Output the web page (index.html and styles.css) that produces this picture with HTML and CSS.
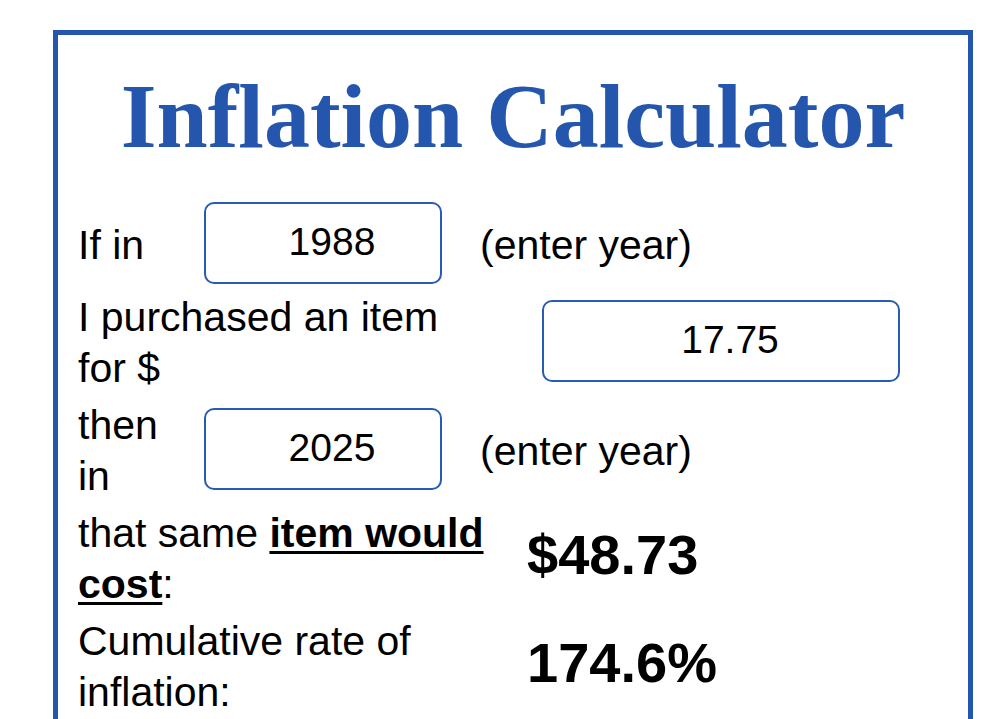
FILE: index.html
```html
<!DOCTYPE html>
<html lang="en">
<head>
  <meta charset="UTF-8">
  <meta name="viewport" content="width=device-width, initial-scale=1.0">
  <title>Inflation Calculator</title>
  <link rel="stylesheet" href="styles.css">
</head>
<body>
  <div class="calculator">
    <h1 class="calc-title">Inflation Calculator</h1>

    <div class="calc-row">
      <span class="calc-label">If in</span>
      <input class="calc-input" type="text" id="startYear" value="1988">
      <span class="calc-hint">(enter year)</span>
    </div>

    <div class="calc-row">
      <span class="calc-label calc-label-wide">I purchased an item for $</span>
      <input class="calc-input calc-input-wide" type="text" id="amount" value="17.75">
    </div>

    <div class="calc-row">
      <span class="calc-label">then in</span>
      <input class="calc-input" type="text" id="endYear" value="2025">
      <span class="calc-hint">(enter year)</span>
    </div>

    <div class="calc-row">
      <span class="calc-label calc-label-result">that same <u class="strong">item would cost</u>:</span>
      <span class="calc-result">$48.73</span>
    </div>

    <div class="calc-row">
      <span class="calc-label calc-label-result">Cumulative rate of inflation:</span>
      <span class="calc-result">174.6%</span>
    </div>
  </div>
</body>
</html>
```

FILE: styles.css
```css
/* General Styles */
body {
  margin: 0;
  padding: 0;
  background: #fff;
  font-family: "Liberation Sans", Arial, sans-serif;
  color: #000;
}

.calculator {
  width: 920px;
  margin: 30px 0 0 53px;
  border: 5px solid #2556ae;
  box-sizing: border-box;
  padding: 0 20px 40px;
}

.calc-title {
  margin: 29px 0 30px;
  font-family: "Liberation Serif", "Times New Roman", serif;
  font-size: 92px;
  line-height: 104px;
  font-weight: bold;
  text-align: center;
  color: #2556ae;
}

/* Rows */
.calc-row {
  display: flex;
  align-items: center;
  min-height: 88px;
  box-sizing: border-box;
  padding: 2px 0 0;
  font-size: 41px;
  line-height: 51px;
}

.calc-label {
  width: 100px;
  margin-right: 26px;
  padding-top: 4px;
  flex-shrink: 0;
}

.calc-label-wide {
  width: 400px;
  margin-right: 64px;
}

.calc-label-result {
  width: 420px;
  margin-right: 29px;
}

.calc-label .strong {
  font-weight: bold;
  text-decoration-thickness: 3px;
  text-underline-offset: 4px;
}

.calc-input {
  width: 238px;
  height: 82px;
  box-sizing: border-box;
  padding: 0 0 3px 18px;
  border: 2px solid #2a5bb3;
  border-radius: 10px;
  background: #fff;
  font-family: "Liberation Sans", Arial, sans-serif;
  font-size: 39px;
  color: #000;
  text-align: center;
}

.calc-input-wide {
  width: 358px;
}

.calc-hint {
  margin-left: 38px;
  padding-top: 4px;
}

.calc-result {
  font-size: 56px;
  line-height: 56px;
  font-weight: bold;
  padding-bottom: 4px;
}
```
